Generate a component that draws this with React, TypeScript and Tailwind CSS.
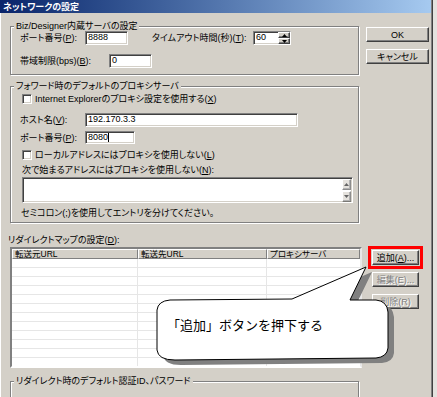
import React from 'react';

const sunken =
  'bg-white border border-t-[#808080] border-l-[#808080] border-b-white border-r-white shadow-[inset_1px_1px_0_#404040,inset_-1px_-1px_0_#d4d0c8]';
const raised =
  'bg-[#d4d0c8] border border-t-white border-l-white border-b-[#404040] border-r-[#404040] shadow-[inset_-1px_-1px_0_#808080]';
const group = 'border border-[#808080] shadow-[inset_1px_1px_0_#fff,1px_1px_0_#fff]';
const legend = '-mt-[6px] ml-[3px] w-fit px-[2px] h-[10px] leading-[10px] bg-[#d4d0c8]';
const label = 'text-[9px] leading-[10px] whitespace-nowrap';

const Field = ({ w, h = 14, children }: { w: number | string; h?: number; children?: React.ReactNode }) => (
  <div
    className={`${sunken} flex items-center pl-[2px] text-[9px] overflow-hidden`}
    style={{ width: w, height: h }}
  >
    {children}
  </div>
);

const Check = () => <div className={`${sunken} w-[10px] h-[10px] shrink-0 mr-[3px]`} />;

const Btn = ({ children, disabled, w }: { children: React.ReactNode; disabled?: boolean; w: number }) => (
  <div
    className={`${raised} h-[15px] flex items-center justify-center text-[9px] leading-[10px] ${
      disabled ? 'text-[#808080] [text-shadow:1px_1px_0_#fff]' : 'text-black'
    }`}
    style={{ width: w }}
  >
    {children}
  </div>
);

const Arrow = ({ up }: { up?: boolean }) => (
  <svg width="5" height="3" viewBox="0 0 5 3">
    <path d={up ? 'M2.5 0 L5 3 L0 3 Z' : 'M0 0 L5 0 L2.5 3 Z'} fill="#000" />
  </svg>
);

export default function App() {
  const rows = Array.from({ length: 12 });
  return (
    <div className="w-[437px] h-[397px] overflow-hidden bg-[#e4e2de] relative font-['Liberation_Sans','Noto_Sans_CJK_JP',sans-serif] [font-feature-settings:'palt'] text-black">
      <div className="w-[433px] h-full bg-[#d4d0c8] border-r border-r-[#404040] shadow-[inset_-1px_0_0_#808080,inset_1px_0_0_#fff]">
        {/* title bar */}
        <div className="h-[13px] mr-[1px] bg-gradient-to-r from-[#0a246a] to-[#a6caf0] flex items-center pl-[3px]">
          <span className="text-white font-bold text-[9px] leading-[10px]">ネットワークの設定</span>
        </div>

        {/* top section */}
        <div className="flex">
          <div className="ml-[10px] mt-[13px] w-[349px]">
            <div className={`${group} h-[49px]`}>
              <div className={`${legend} text-[9px]`}>Biz/Designer内蔵サーバの設定</div>
              <div className="pl-[9px]">
                <div className="flex items-center h-[14px]">
                  <div className={`${label} w-[65px]`}>
                    ポート番号(<u>P</u>):
                  </div>
                  <Field w={43}>8888</Field>
                  <div className={`${label} ml-[24px] w-[101px]`}>
                    タイムアウト時間(秒)(<u>T</u>):
                  </div>
                  <div className={`${sunken} w-[38px] h-[14px] flex items-center pl-[2px] text-[9px]`}>
                    <span className="flex-1">60</span>
                    <div className="flex flex-col w-[12px] h-full">
                      <div className={`${raised} flex-1 flex items-center justify-center`}>
                        <Arrow up />
                      </div>
                      <div className={`${raised} flex-1 flex items-center justify-center`}>
                        <Arrow />
                      </div>
                    </div>
                  </div>
                </div>
                <div className="flex items-center h-[14px] mt-[9px]">
                  <div className={`${label} w-[89px]`}>
                    帯域制限(bps)(<u>B</u>):
                  </div>
                  <Field w={43}>0</Field>
                </div>
              </div>
            </div>

            <div className={`${group} h-[137px] mt-[11px]`}>
              <div className={`${legend} text-[9px] ml-[2px]`}>フォワード時のデフォルトのプロキシサーバ</div>
              <div className="pl-[9px]">
                <div className="flex items-center h-[12px] mt-[2px] ml-[2px]">
                  <Check />
                  <span className={label}>
                    Internet Explorerのプロキシ設定を使用する(<u>X</u>)
                  </span>
                </div>
                <div className="flex items-center h-[14px] mt-[8px]">
                  <div className={`${label} w-[65px]`}>
                    ホスト名(<u>V</u>):
                  </div>
                  <Field w={213}>192.170.3.3</Field>
                </div>
                <div className="flex items-center h-[13px] mt-[4px]">
                  <div className={`${label} w-[65px]`}>
                    ポート番号(<u>P</u>):
                  </div>
                  <Field w={50} h={13}>
                    8080<span className="inline-block w-px h-[9px] bg-black" />
                  </Field>
                </div>
                <div className="flex items-center h-[12px] mt-[5px] ml-[2px]">
                  <Check />
                  <span className={label}>
                    ローカルアドレスにはプロキシを使用しない(<u>L</u>)
                  </span>
                </div>
                <div className={`${label} mt-[4px] ml-[2px]`}>
                  次で始まるアドレスにはプロキシを使用しない(<u>N</u>):
                </div>
                <div className={`${sunken} mt-[2px] ml-[2px] w-[331px] h-[26px] flex justify-end pr-[1px] pt-[1px]`}>
                  <div className="flex flex-col w-[9px] gap-[1px]">
                    <div className={`${raised} h-[11px] flex items-center justify-center opacity-60`}>
                      <Arrow up />
                    </div>
                    <div className={`${raised} h-[11px] flex items-center justify-center opacity-60`}>
                      <Arrow />
                    </div>
                  </div>
                </div>
                <div className={`${label} mt-[5px] ml-[1px]`}>セミコロン(;)を使用してエントリを分けてください。</div>
              </div>
            </div>
          </div>

          <div className="ml-[7px] mt-[14px] flex flex-col gap-[7px]">
            <Btn w={63}>OK</Btn>
            <Btn w={63}>キャンセル</Btn>
          </div>
        </div>

        {/* redirect map */}
        <div className={`${label} ml-[8px] mt-[12px]`}>
          リダイレクトマップの設定(<u>D</u>):
        </div>
        <div className="flex items-start ml-[10px] mt-[2px]">
          <div className="w-[352px] h-[121px] bg-white border-2 border-t-[#808080] border-l-[#808080] border-b-white border-r-[#e8e8e8] overflow-hidden">
            <div className="grid grid-cols-[126px_129px_1fr] h-[10px] text-[8.5px] leading-[8px]">
              {['転送元URL', '転送先URL', 'プロキシサーバ'].map((t) => (
                <div
                  key={t}
                  className="bg-[#d4d0c8] border-t border-l border-t-white border-l-white border-r border-b border-r-[#808080] border-b-[#808080] pl-[2px] flex items-center"
                >
                  {t}
                </div>
              ))}
            </div>
            {rows.map((_, i) => (
              <div key={i} className="grid grid-cols-[126px_129px_1fr] h-[9px]">
                <div className="border-b border-r border-[#e6e6e6]" />
                <div className="border-b border-r border-[#e6e6e6]" />
                <div className="border-b border-[#e6e6e6]" />
              </div>
            ))}
          </div>
          <div className="ml-[6px] -mt-[1px] flex flex-col">
            <div className="border-[3px] border-[#ff0000] p-[1px] w-fit">
              <Btn w={47}>
                追加(<u>A</u>)...
              </Btn>
            </div>
            <div className="ml-[4px] mt-[3px]">
              <Btn w={47} disabled>
                編集(E)...
              </Btn>
            </div>
            <div className="ml-[4px] mt-[7px]">
              <Btn w={47} disabled>
                削除(R)
              </Btn>
            </div>
          </div>
        </div>

        {/* auth group */}
        <div className={`${group} ml-[10px] mt-[13px] w-[349px] h-[40px]`}>
          <div className={`${legend} text-[9px] ml-[2px]`}>リダイレクト時のデフォルト認証ID、パスワード</div>
        </div>
      </div>

      {/* callout */}
      <div className="absolute left-[150px] top-[260px] w-[250px] h-[115px]">
        <svg className="absolute inset-0" width="250" height="115" viewBox="150 260 250 115">
          <g transform="translate(6 5)">
            <path
              d="M170 300 L292 299 L366 267 L350 300 L376 300 Q387 301 388 312 L388 348 Q387 357 376 358 L175 360 Q158 360 157 350 L157 310 Q158 301 170 300 Z"
              fill="#808080"
            />
          </g>
          <path
            d="M170 300 L292 299 L366 267 L350 300 L376 300 Q387 301 388 312 L388 348 Q387 357 376 358 L175 360 Q158 360 157 350 L157 310 Q158 301 170 300 Z"
            fill="#fff"
            stroke="#000"
            strokeWidth="1"
          />
        </svg>
        <div className="absolute left-[17px] top-[57px] text-[13px] leading-[16px] whitespace-nowrap font-['Noto_Sans_CJK_JP',sans-serif] [font-feature-settings:normal]">
          「追加」ボタンを押下する
        </div>
      </div>
    </div>
  );
}
